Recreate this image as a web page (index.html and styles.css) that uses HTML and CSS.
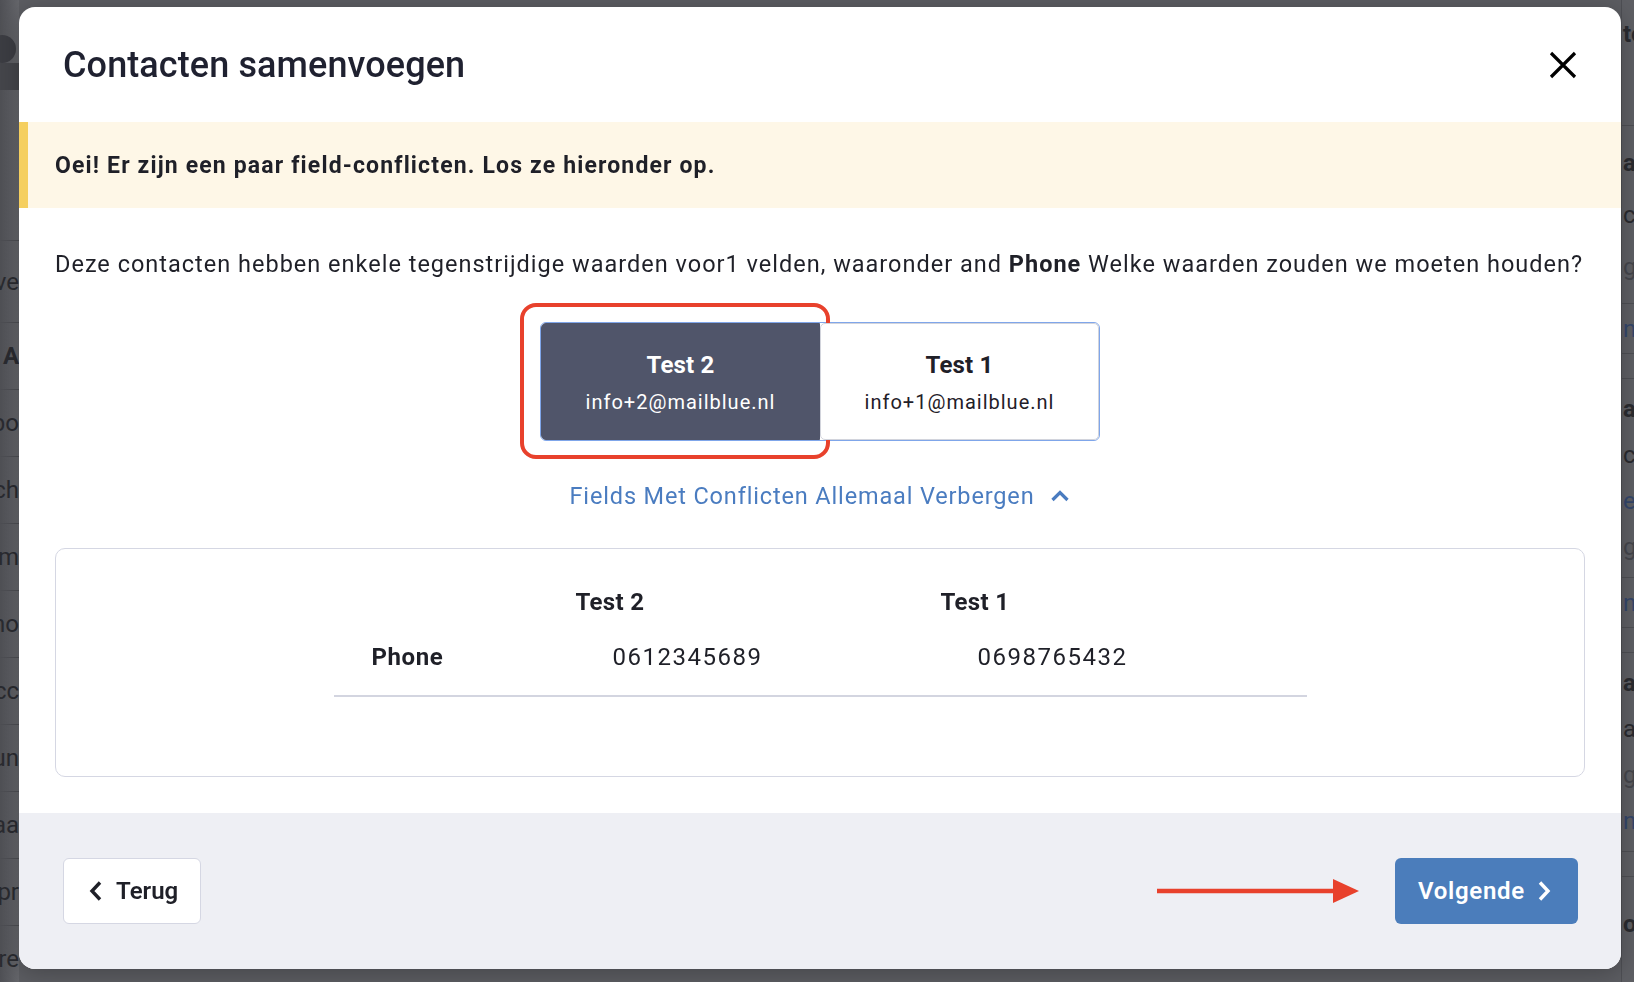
FILE: index.html
```html
<!DOCTYPE html>
<html lang="nl">
<head>
    <meta charset="UTF-8">
    <meta name="viewport" content="width=device-width, initial-scale=1.0">
    <title>Contacten samenvoegen</title>
    <link rel="stylesheet" href="styles.css">
</head>
<body>

<!-- de pagina achter de modal -->
<div class="page">
    <div class="edge edge-left">
        <div class="avatar-row"><span class="avatar"></span></div>
        <div class="bar-row"></div>
        <div class="gap-row"></div>
        <div class="row head"><span>ve</span></div>
        <div class="row"><span class="bold">A</span></div>
        <div class="row"><span>bo</span></div>
        <div class="row"><span>ch</span></div>
        <div class="row"><span>-m</span></div>
        <div class="row"><span>no</span></div>
        <div class="row"><span>cc</span></div>
        <div class="row"><span>un</span></div>
        <div class="row"><span>aa</span></div>
        <div class="row"><span>pr</span></div>
        <div class="row"><span>core</span></div>
    </div>
    <div class="edge edge-right">
        <div class="r-top"><span class="bold">te</span></div>
        <div class="r-block">
            <span class="bold">a</span><span>c</span><span class="muted">ge</span>
        </div>
        <div class="r-link"><span class="blue">ne</span></div>
        <div class="r-spacer"></div>
        <div class="r-block tall">
            <span class="bold">a</span><span>c</span><span class="blue">e</span><span class="muted">ge</span>
        </div>
        <div class="r-link"><span class="blue">ne</span></div>
        <div class="r-spacer"></div>
        <div class="r-block tall">
            <span class="bold">a</span><span>a</span><span class="muted">ge</span><span class="blue">ne</span>
        </div>
        <div class="r-spacer"></div>
        <div class="r-end"><span class="bold">or</span></div>
    </div>
</div>

<div class="modal">
    <div class="modal-header">
        <h1>Contacten samenvoegen</h1>
        <button class="close" aria-label="Sluiten">
            <svg width="28" height="28" viewBox="0 0 28 28"><path d="M2 2 L26 26 M26 2 L2 26" stroke="#000" stroke-width="3.2" fill="none"/></svg>
        </button>
    </div>

    <div class="alert">Oei! Er zijn een paar field-conflicten. Los ze hieronder op.</div>

    <div class="modal-body">
        <p class="intro">Deze contacten hebben enkele tegenstrijdige waarden voor1 velden, waaronder and <b>Phone</b> Welke waarden zouden we moeten houden?</p>

        <div class="choice">
            <div class="choice-group">
                <button class="option selected">
                    <strong>Test 2</strong>
                    <span>info+2@mailblue.nl</span>
                    <i class="mark-ring"></i>
                </button>
                <button class="option">
                    <strong>Test 1</strong>
                    <span>info+1@mailblue.nl</span>
                </button>
            </div>
        </div>

        <div class="toggle">
            <a class="toggle-link">Fields Met Conflicten Allemaal Verbergen
                <svg width="20" height="12" viewBox="0 0 20 12"><path d="M2.5 10 L10 2.5 L17.5 10" stroke="#4a7cc0" stroke-width="3.2" fill="none"/></svg>
            </a>
        </div>

        <div class="conflicts">
            <div class="conflict-table">
                <div class="th"></div>
                <div class="th">Test 2</div>
                <div class="th">Test 1</div>
                <div class="td label">Phone</div>
                <div class="td">0612345689</div>
                <div class="td">0698765432</div>
            </div>
        </div>
    </div>

    <div class="modal-footer">
        <button class="btn back">
            <svg width="14" height="22" viewBox="0 0 14 22"><path d="M11 2.5 L3 11 L11 19.5" stroke="#1f2028" stroke-width="3.4" fill="none"/></svg>
            Terug
        </button>
        <div class="next-wrap">
            <svg class="mark-arrow" width="202" height="26" viewBox="0 0 202 26"><path d="M0 13 H180" stroke="#e8412c" stroke-width="4.5"/><path d="M176 1 L202 13 L176 25 Z" fill="#e8412c"/></svg>
            <button class="btn next">
                Volgende
                <svg width="14" height="22" viewBox="0 0 14 22"><path d="M3 2.5 L11 11 L3 19.5" stroke="#fff" stroke-width="3.4" fill="none"/></svg>
            </button>
        </div>
    </div>
</div>

</body>
</html>
```

FILE: styles.css
```css
* {
    box-sizing: border-box;
}
body {
    margin: 0;
    height: 982px;
    overflow: hidden;
    font-family: Roboto, "Liberation Sans", sans-serif;
    color: #1f2028;
    background: #5c5d62;
}

/* achtergrond pagina (gedimd) */
.page {
    display: flex;
    justify-content: space-between;
    height: 982px;
    font-size: 24px;
    color: #2a2b30;
}
.edge {
    overflow: hidden;
    white-space: nowrap;
}
.edge-left {
    width: 19px;
    background: linear-gradient(90deg, #4f5055, #66676c);
}
.edge-right {
    width: 13px;
    background: #5e5f64;
    border-left: 1px solid #4e4f54;
}
.bold {
    font-weight: 700;
}
.muted {
    color: #45464c;
}
.blue {
    color: #34466a;
}
.avatar-row {
    height: 63px;
    padding-top: 35px;
}
.avatar {
    display: block;
    width: 28px;
    height: 28px;
    margin-left: -12px;
    border-radius: 50%;
    background: #3c3d43;
}
.bar-row {
    height: 27px;
    background: #45464b;
}
.gap-row {
    height: 150px;
}
.row {
    height: 67px;
    border-top: 1px solid #4e4f54;
    display: flex;
    align-items: center;
    justify-content: flex-end;
}
.row.head {
    height: 82px;
}
.edge-right > div {
    display: flex;
    flex-direction: column;
    justify-content: center;
    padding-left: 1px;
}
.edge-right > div + div {
    border-top: 1px solid #4e4f54;
}
.r-top {
    height: 125px;
    justify-content: flex-start !important;
    padding-top: 20px;
}
.r-block {
    height: 178px;
    gap: 22px;
    line-height: 30px;
}
.r-block.tall {
    height: 199px;
    gap: 16px;
}
.r-link {
    height: 50px;
}
.r-spacer {
    height: 25px;
}
.r-end {
    height: 62px;
    justify-content: flex-end !important;
}

/* modal */
.modal {
    position: fixed;
    left: 19px;
    top: 7px;
    width: 1602px;
    height: 962px;
    background: #fff;
    border-radius: 16px;
    overflow: hidden;
    display: flex;
    flex-direction: column;
    box-shadow: 0 4px 24px rgba(0, 0, 0, 0.25);
}
.modal-header {
    height: 115px;
    padding: 0 44px;
    display: flex;
    align-items: center;
    justify-content: space-between;
}
.modal-header h1 {
    margin: 0;
    font-size: 36px;
    font-weight: 500;
    letter-spacing: 0.1px;
    color: #1f2130;
}
.close {
    border: none;
    background: none;
    padding: 0;
    width: 28px;
    height: 28px;
    cursor: pointer;
}
.close svg {
    display: block;
}
.alert {
    height: 86px;
    border-left: 9px solid #f5cf5f;
    background: #fef7e7;
    padding-left: 27px;
    display: flex;
    align-items: center;
    font-size: 23px;
    font-weight: 700;
    letter-spacing: 1.15px;
    color: #1f2028;
}
.modal-body {
    flex: 1;
    padding: 40px 36px 36px;
}
.intro {
    margin: 0;
    font-size: 23.5px;
    line-height: 32px;
    letter-spacing: 1px;
    white-space: nowrap;
}
.intro b {
    font-weight: 700;
}
.choice {
    display: flex;
    justify-content: center;
    margin-top: 42px;
}
.choice-group {
    display: flex;
    border: 1px solid #7fa6ea;
    border-radius: 6px;
}
.option {
    position: relative;
    width: 279px;
    height: 117px;
    padding: 26px 0 0;
    display: flex;
    flex-direction: column;
    align-items: center;
    gap: 8px;
    border: 1px solid #d2d4dc;
    border-radius: 5px;
    background: #fff;
    color: #1f2028;
    font-family: inherit;
    cursor: pointer;
}
.option strong {
    font-size: 24px;
    line-height: 30px;
    font-weight: 700;
    letter-spacing: 0.2px;
}
.option span {
    font-size: 20px;
    line-height: 28px;
    letter-spacing: 1px;
}
.option.selected {
    background: #50556a;
    border-color: #50556a;
    color: #fff;
    border-radius: 5px 0 0 5px;
}
/* rode markering rond de gekozen optie */
.mark-ring {
    position: absolute;
    left: -22px;
    top: -21px;
    right: -11px;
    bottom: -20px;
    border: 4px solid #e8412c;
    border-radius: 16px;
}
.toggle {
    display: flex;
    justify-content: center;
    margin-top: 39px;
}
.toggle-link {
    display: flex;
    align-items: center;
    gap: 16px;
    font-size: 23.5px;
    line-height: 32px;
    letter-spacing: 0.85px;
    color: #4a7cc0;
    cursor: pointer;
}
.conflicts {
    margin-top: 36px;
    height: 229px;
    border: 1px solid #d5d7e3;
    border-radius: 10px;
    padding-top: 37px;
}
.conflict-table {
    width: 973px;
    margin: 0 auto;
    display: grid;
    grid-template-columns: 242px 365px 366px;
    font-size: 24px;
    line-height: 32px;
}
.th {
    font-weight: 700;
    padding-bottom: 23px;
    letter-spacing: 0.3px;
}
.td {
    padding: 0 0 22px 37px;
    border-bottom: 2px solid #d3d5e0;
    letter-spacing: 1.5px;
}
.td.label {
    font-weight: 700;
    padding-left: 38px;
    letter-spacing: 0.6px;
}
.modal-footer {
    height: 156px;
    background: #eeeff4;
    padding: 0 43px 0 44px;
    display: flex;
    align-items: center;
    justify-content: space-between;
}
.btn {
    height: 66px;
    display: flex;
    align-items: center;
    border-radius: 6px;
    font-family: inherit;
    font-size: 24px;
    font-weight: 600;
    cursor: pointer;
}
.btn.back {
    width: 138px;
    padding-left: 25px;
    gap: 13px;
    background: #fff;
    border: 1px solid #d5d7e3;
    color: #1f2028;
}
.btn.next {
    width: 183px;
    padding-left: 23px;
    gap: 12px;
    background: #4b7dbb;
    border: none;
    color: #fff;
    letter-spacing: 0.7px;
}
.next-wrap {
    display: flex;
    align-items: center;
    gap: 36px;
}
.mark-arrow {
    display: block;
}
```
